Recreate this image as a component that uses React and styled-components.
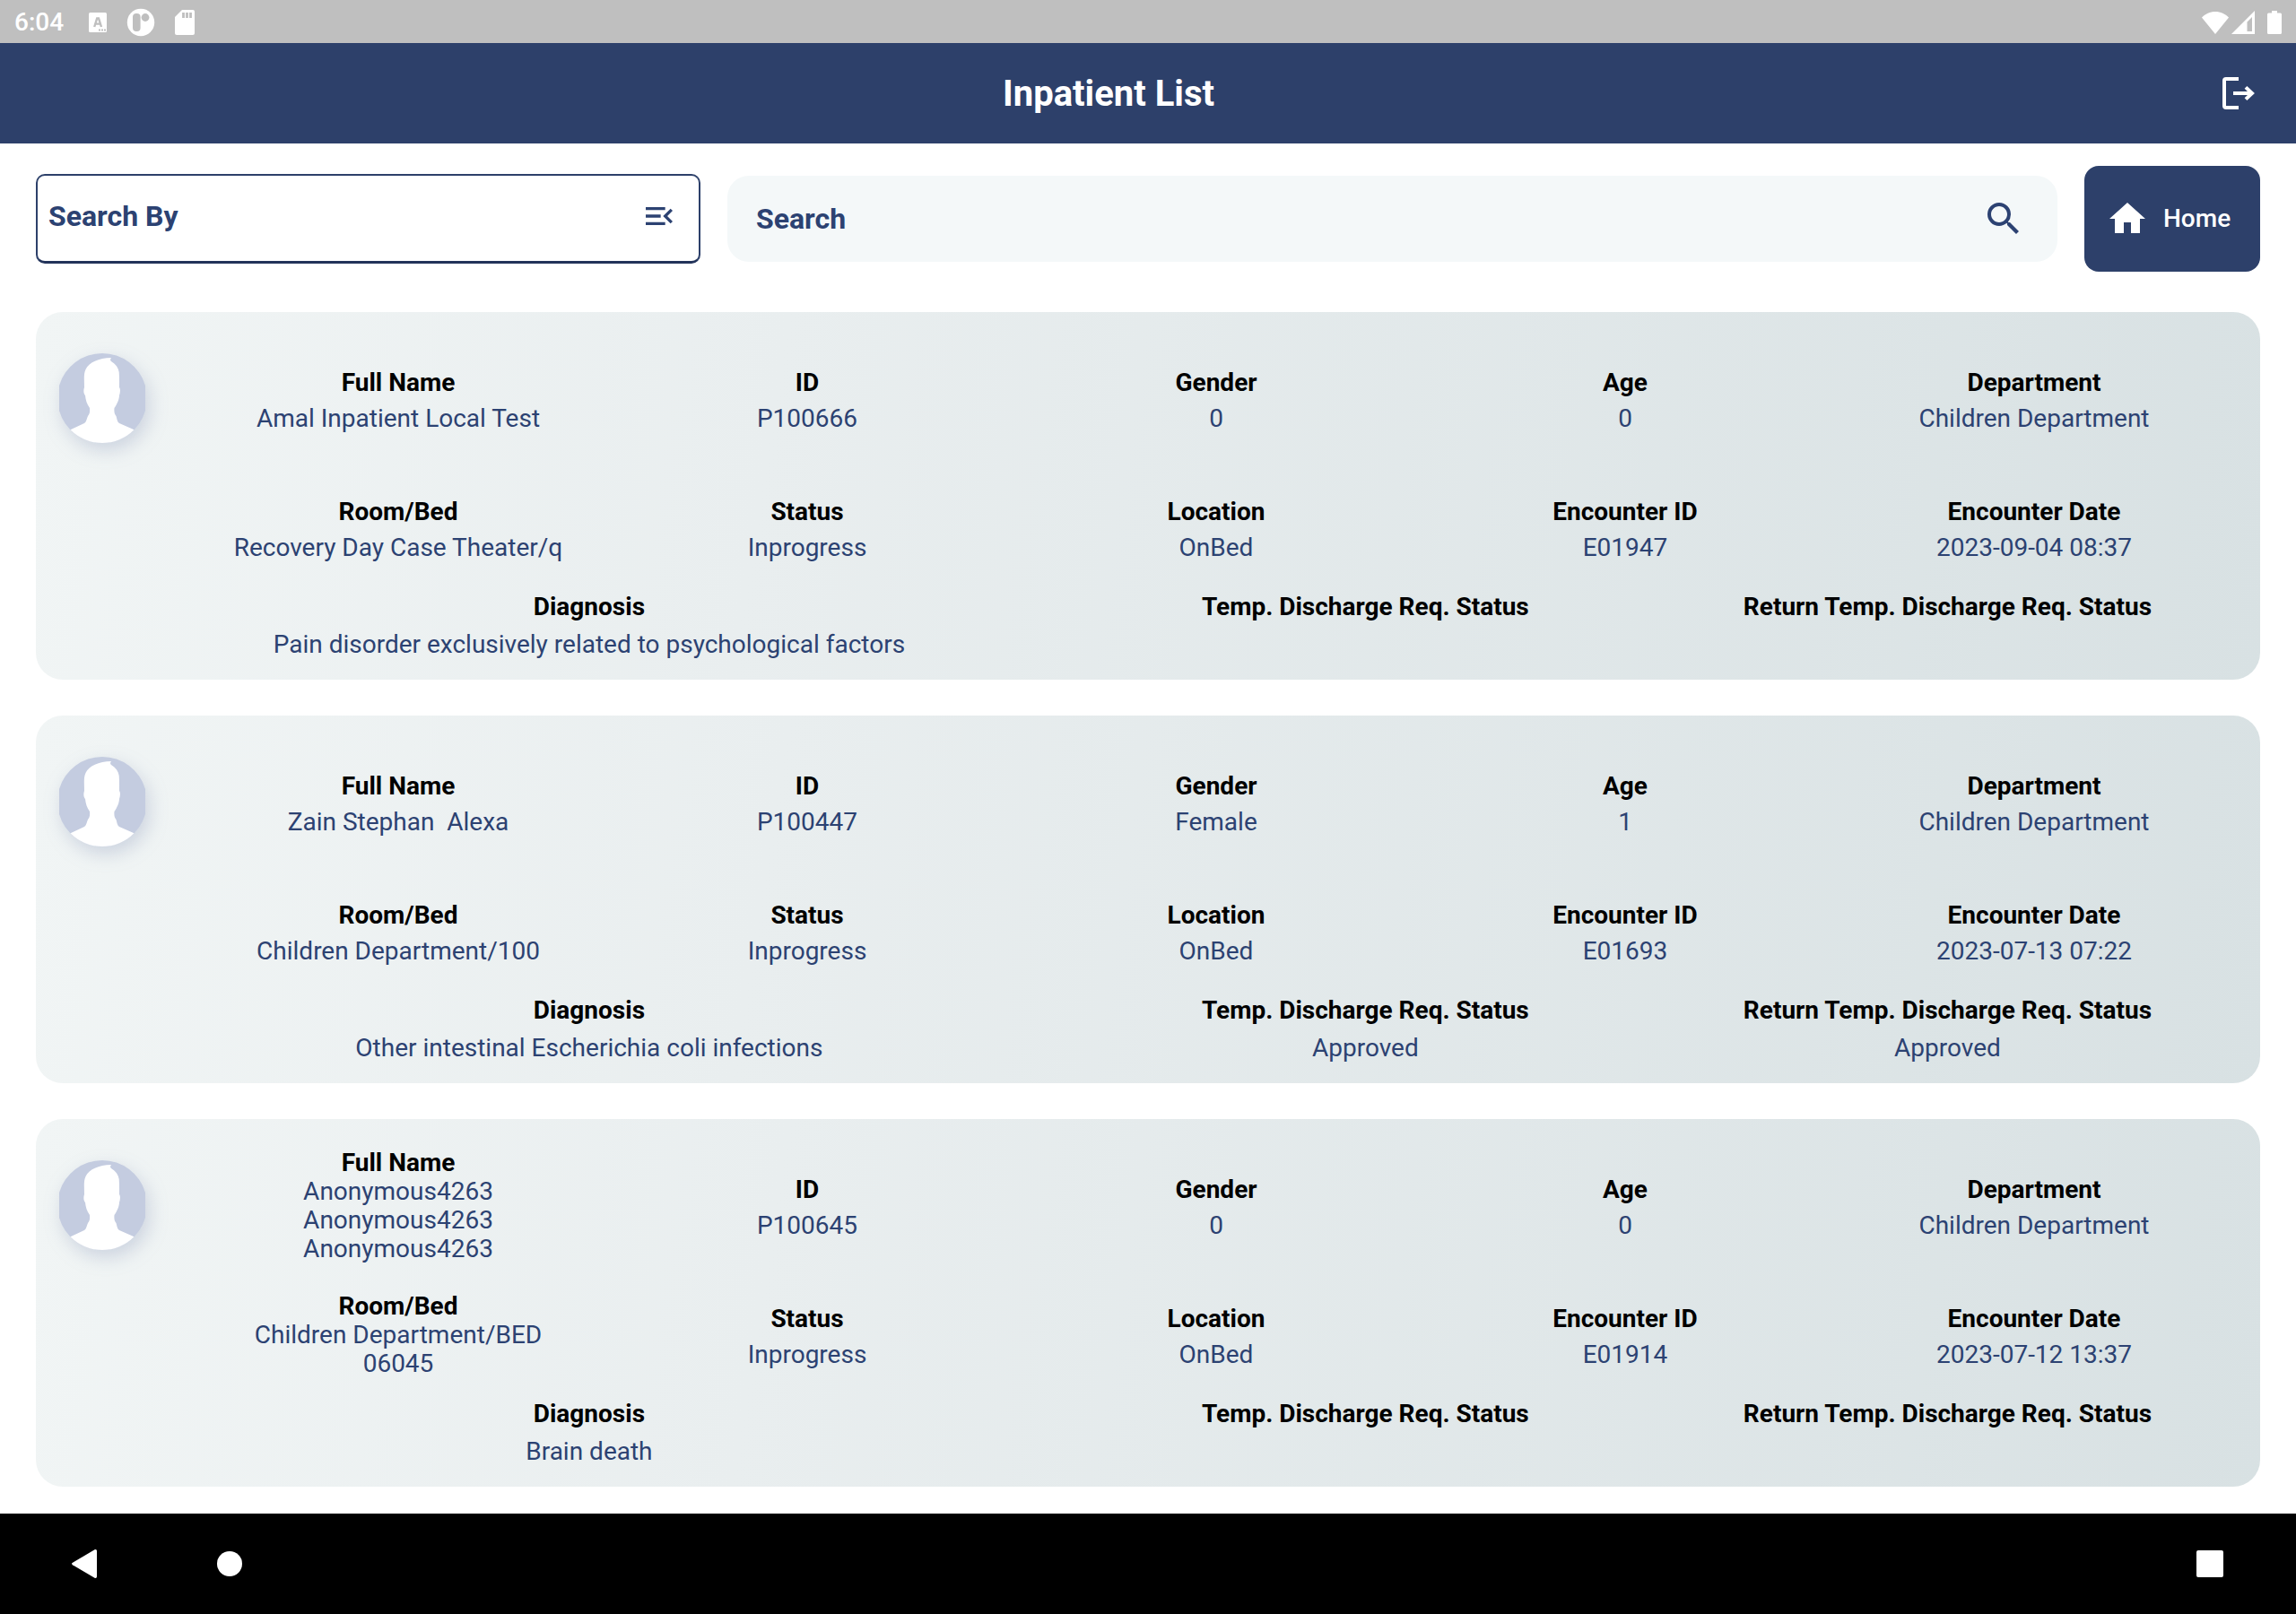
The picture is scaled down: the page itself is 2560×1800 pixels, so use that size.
import React from "react";
import styled, { createGlobalStyle } from "styled-components";
import { MdHome, MdSearch, MdMenuOpen } from "react-icons/md";

const navy = "#2d406a";
const ink = "#2c4272";

const GlobalStyle = createGlobalStyle`
  * { box-sizing: border-box; }
  body { margin: 0; background: #fff; font-family: Roboto, sans-serif; }
  button, input { font-family: inherit; }
`;

const Page = styled.div`
  min-height: 100vh;
  display: flex;
  flex-direction: column;
`;

const StatusBar = styled.div`
  height: 48px;
  padding: 2px 16px 0;
  display: flex;
  justify-content: space-between;
  align-items: center;
  background: #bfbfbf;
  color: #fff;
`;

const StatusGroup = styled.div`
  display: flex;
  align-items: center;
  gap: ${(p) => p.$gap}px;
`;

const Clock = styled.time`
  font-size: 28px;
  line-height: 32px;
  font-weight: 500;
  margin-right: 12px;
`;

const AppBar = styled.header`
  height: 112px;
  padding: 0 40px;
  display: grid;
  grid-template-columns: 48px 1fr 48px;
  align-items: center;
  background: ${navy};
  color: #fff;
`;

const Title = styled.h1`
  grid-column: 2;
  margin: 0;
  padding: 2px 88px 0 0;
  font-size: 40px;
  line-height: 48px;
  font-weight: 700;
  text-align: center;
`;

const IconButton = styled.button`
  display: flex;
  align-items: center;
  justify-content: center;
  padding: 0;
  border: 0;
  background: none;
  color: inherit;
  cursor: pointer;
`;

const Toolbar = styled.form`
  display: grid;
  grid-template-columns: 741fr 1483fr 196px;
  gap: 30px;
  align-items: center;
  padding: 25px 40px 45px;
`;

const SearchBy = styled.button`
  height: 100px;
  display: flex;
  align-items: center;
  justify-content: space-between;
  padding: 0 24px 6px 12px;
  border: 2px solid ${navy};
  border-bottom: 3px solid #22335a;
  border-radius: 10px;
  background: #fff;
  color: ${ink};
  font-size: 32px;
  line-height: 40px;
  font-weight: 700;
  cursor: pointer;
`;

const SearchField = styled.div`
  height: 96px;
  display: flex;
  align-items: center;
  padding: 0 36px 0 32px;
  border-radius: 24px;
  background: #f4f8f9;
  color: ${ink};
`;

const SearchInput = styled.input`
  flex: 1;
  min-width: 0;
  padding: 0;
  border: 0;
  outline: 0;
  background: none;
  color: ${ink};
  font-size: 32px;
  line-height: 40px;
  font-weight: 700;
  &::placeholder { color: ${ink}; opacity: 1; }
`;

const HomeButton = styled.button`
  height: 118px;
  display: flex;
  align-items: center;
  gap: 16px;
  padding: 0 24px;
  border: 0;
  border-radius: 16px;
  background: ${navy};
  color: #fff;
  font-size: 28px;
  line-height: 32px;
  font-weight: 500;
  cursor: pointer;
`;

const List = styled.main`
  flex: 1;
  display: flex;
  flex-direction: column;
  gap: 40px;
  padding: 0 40px 30px;
`;

const Card = styled.article`
  display: grid;
  grid-template-columns: 152px 1fr;
  padding: 25px 24px 23px;
  border-radius: 30px;
  background: linear-gradient(99deg, #f1f5f5, #e9eeef 33%, #d8e1e3);
`;

const Avatar = styled.svg`
  display: block;
  width: 96px;
  height: 100px;
  margin: 21px 0 0 2px;
  filter: drop-shadow(4px 8px 10px rgba(100, 115, 165, 0.25));
`;

const Fields = styled.dl`
  margin: 0;
  display: grid;
  grid-template-columns: repeat(5, 1fr);
  grid-auto-rows: 144px;
`;

const Summary = styled.dl`
  grid-column: 1 / -1;
  margin: 0;
  padding-left: 52px;
  display: grid;
  grid-template-columns: 5fr 3fr 3fr;
`;

const Field = styled.div`
  display: flex;
  flex-direction: column;
  align-items: center;
  justify-content: center;
  gap: ${(p) => (p.$dense ? 0 : 8)}px;
  padding-top: ${(p) => (p.$dense ? 0 : 4)}px;
  text-align: center;
`;

const SummaryField = styled.div`
  display: flex;
  flex-direction: column;
  align-items: center;
  gap: 10px;
  text-align: center;
`;

const Label = styled.dt`
  font-size: 28px;
  line-height: 32px;
  font-weight: 700;
  color: #000;
`;

const Value = styled.dd`
  margin: 0;
  min-height: 32px;
  max-width: 380px;
  font-size: 28px;
  line-height: 32px;
  color: ${ink};
  white-space: pre-wrap;
`;

const WideValue = styled(Value)`
  max-width: none;
`;

const NavBar = styled.nav`
  height: 112px;
  padding: 0 72px;
  display: flex;
  align-items: center;
  gap: 112px;
  background: #000;
  color: #fff;
`;

const NavButton = styled(IconButton)`
  width: 48px;
  height: 48px;
  margin-left: ${(p) => (p.$end ? "auto" : "0")};
`;

const KeyboardIcon = () => (
  <svg width="20" height="22" viewBox="0 0 20 22" aria-hidden="true">
    <rect width="20" height="22" rx="1.5" fill="#fff" />
    <path d="M6.2 16 9.2 6.4h1.8L14 16M7.6 12.6h5" fill="none" stroke="#bfbfbf" strokeWidth="2.4" />
    <path d="M11 19.5h2M14 19.5h2M17 19.5h2" stroke="#bfbfbf" strokeWidth="1.8" />
  </svg>
);

const DebugIcon = () => (
  <svg width="32" height="32" viewBox="0 0 32 32" aria-hidden="true">
    <circle cx="16" cy="16" r="15.2" fill="#fff" />
    <rect x="7" y="6" width="8.6" height="20" rx="4" fill="#bfbfbf" />
    <circle cx="21" cy="10.5" r="4.4" fill="#bfbfbf" />
  </svg>
);

const CardIcon = () => (
  <svg width="22" height="28" viewBox="0 0 22 28" aria-hidden="true">
    <path d="M8 0h12a2 2 0 0 1 2 2v24a2 2 0 0 1-2 2H2a2 2 0 0 1-2-2V8z" fill="#fff" />
    <path d="M9.5 3v6M13.5 3v6M17.5 3v6" stroke="#bfbfbf" strokeWidth="2.8" />
  </svg>
);

const WifiIcon = () => (
  <svg width="30" height="25" viewBox="0 0 30 25" aria-hidden="true">
    <path d="M15 25 0 6.5C4 2.500 9 0 15 0s11 2.500 15 6.500z" fill="#fff" />
  </svg>
);

const SignalIcon = () => (
  <svg width="26" height="26" viewBox="0 0 26 26" aria-hidden="true">
    <path d="M0 26 26 0v26zM17.500 23H23V7l-5.500 5.500z" fill="#fff" fillRule="evenodd" />
  </svg>
);

const BatteryIcon = () => (
  <svg width="16" height="26" viewBox="0 0 16 26" aria-hidden="true">
    <path d="M5 0h6v2.500h3.500A1.500 1.500 0 0 1 16 4v20.500a1.500 1.500 0 0 1-1.500 1.500h-13A1.500 1.500 0 0 1 0 24.500V4a1.500 1.500 0 0 1 1.500-1.500H5z" fill="#fff" />
  </svg>
);

const LogoutIcon = () => (
  <svg width="36" height="36" viewBox="0 0 36 36" fill="none" stroke="#fff" strokeWidth="4" aria-hidden="true">
    <path d="M18 2H4a2 2 0 0 0-2 2v28a2 2 0 0 0 2 2h14" />
    <path d="M12 18h22M26 11.400l7 6.600-7 6.600" />
  </svg>
);

const Person = () => (
  <Avatar viewBox="0 0 96 100" role="img" aria-label="Patient photo">
    <path d="M48 0A50 50 0 0 1 96 36v28a50 50 0 0 1-96 0V36A50 50 0 0 1 48 0z" fill="#c4cce0" />
    <path
      d="M12.500 85.200 28 78c2.500-1.500 2.500-5 4-8 1.500-2 2.500-4 2-9-3-4-4.500-9-5-14-2-2-2-6-1-9 0-7-1-15 1.500-20C33 10.500 44 5 58 5c-1.500 2-1 3 0 4 5 3 8 7 8.700 12 .500 6 .300 12 .300 17 1.500 2 1 6 0 9 0 4-2.500 10-5.500 14-.500 5 .500 7 2 9 1 3 1 6.500 3.500 8l16.500 7.200A50 50 0 0 1 12.500 85.200z"
      fill="#fff"
    />
  </Avatar>
);

const patients = [
  {
    fields: [
      ["Full Name", "Amal Inpatient Local Test"],
      ["ID", "P100666"],
      ["Gender", "0"],
      ["Age", "0"],
      ["Department", "Children Department"],
      ["Room/Bed", "Recovery Day Case Theater/q"],
      ["Status", "Inprogress"],
      ["Location", "OnBed"],
      ["Encounter ID", "E01947"],
      ["Encounter Date", "2023-09-04 08:37"],
    ],
    summary: ["Pain disorder exclusively related to psychological factors", "", ""],
  },
  {
    fields: [
      ["Full Name", "Zain Stephan  Alexa"],
      ["ID", "P100447"],
      ["Gender", "Female"],
      ["Age", "1"],
      ["Department", "Children Department"],
      ["Room/Bed", "Children Department/100"],
      ["Status", "Inprogress"],
      ["Location", "OnBed"],
      ["Encounter ID", "E01693"],
      ["Encounter Date", "2023-07-13 07:22"],
    ],
    summary: ["Other intestinal Escherichia coli infections", "Approved", "Approved"],
  },
  {
    fields: [
      ["Full Name", "Anonymous4263\nAnonymous4263\nAnonymous4263"],
      ["ID", "P100645"],
      ["Gender", "0"],
      ["Age", "0"],
      ["Department", "Children Department"],
      ["Room/Bed", "Children Department/BED 06045"],
      ["Status", "Inprogress"],
      ["Location", "OnBed"],
      ["Encounter ID", "E01914"],
      ["Encounter Date", "2023-07-12 13:37"],
    ],
    summary: ["Brain death", "", ""],
  },
];

const summaryLabels = ["Diagnosis", "Temp. Discharge Req. Status", "Return Temp. Discharge Req. Status"];
const isMultiLine = (text) => text.includes("\n") || text.length > 28;

const PatientCard = ({ patient }) => (
  <Card>
    <Person />
    <Fields>
      {patient.fields.map(([label, value]) => (
        <Field key={label} $dense={isMultiLine(value)}>
          <Label>{label}</Label>
          <Value>{value}</Value>
        </Field>
      ))}
    </Fields>
    <Summary>
      {summaryLabels.map((label, i) => (
        <SummaryField key={label}>
          <Label>{label}</Label>
          <WideValue>{patient.summary[i]}</WideValue>
        </SummaryField>
      ))}
    </Summary>
  </Card>
);

export default function App() {
  return (
    <Page>
      <GlobalStyle />
      <StatusBar>
        <StatusGroup $gap={16}>
          <Clock>6:04</Clock>
          <StatusGroup $gap={22}>
            <KeyboardIcon />
            <DebugIcon />
            <CardIcon />
          </StatusGroup>
        </StatusGroup>
        <StatusGroup $gap={14}>
          <StatusGroup $gap={3}>
            <WifiIcon />
            <SignalIcon />
          </StatusGroup>
          <BatteryIcon />
        </StatusGroup>
      </StatusBar>
      <AppBar>
        <Title>Inpatient List</Title>
        <IconButton aria-label="Log out">
          <LogoutIcon />
        </IconButton>
      </AppBar>
      <Toolbar onSubmit={(e) => e.preventDefault()}>
        <SearchBy type="button">
          Search By
          <MdMenuOpen size={40} />
        </SearchBy>
        <SearchField>
          <SearchInput type="text" aria-label="Search" placeholder="Search" />
          <IconButton type="submit" aria-label="Submit search">
            <MdSearch size={48} />
          </IconButton>
        </SearchField>
        <HomeButton type="button">
          <MdHome size={48} />
          Home
        </HomeButton>
      </Toolbar>
      <List>
        {patients.map((patient) => (
          <PatientCard key={patient.fields[1][1]} patient={patient} />
        ))}
      </List>
      <NavBar aria-label="System">
        <NavButton aria-label="Back">
          <svg width="32" height="32" viewBox="0 0 32 32" aria-hidden="true">
            <path d="M25.500.300C27-.300 28 .500 28 2v28c0 1.500-1 2.300-2.500 1.700L1 17.200c-1.300-.800-1.300-1.600 0-2.400z" fill="#fff" />
          </svg>
        </NavButton>
        <NavButton aria-label="Home screen">
          <svg width="28" height="28" viewBox="0 0 28 28" aria-hidden="true">
            <circle cx="14" cy="14" r="14" fill="#fff" />
          </svg>
        </NavButton>
        <NavButton $end aria-label="Recent apps">
          <svg width="30" height="30" viewBox="0 0 30 30" aria-hidden="true">
            <rect width="30" height="30" rx="2" fill="#fff" />
          </svg>
        </NavButton>
      </NavBar>
    </Page>
  );
}
